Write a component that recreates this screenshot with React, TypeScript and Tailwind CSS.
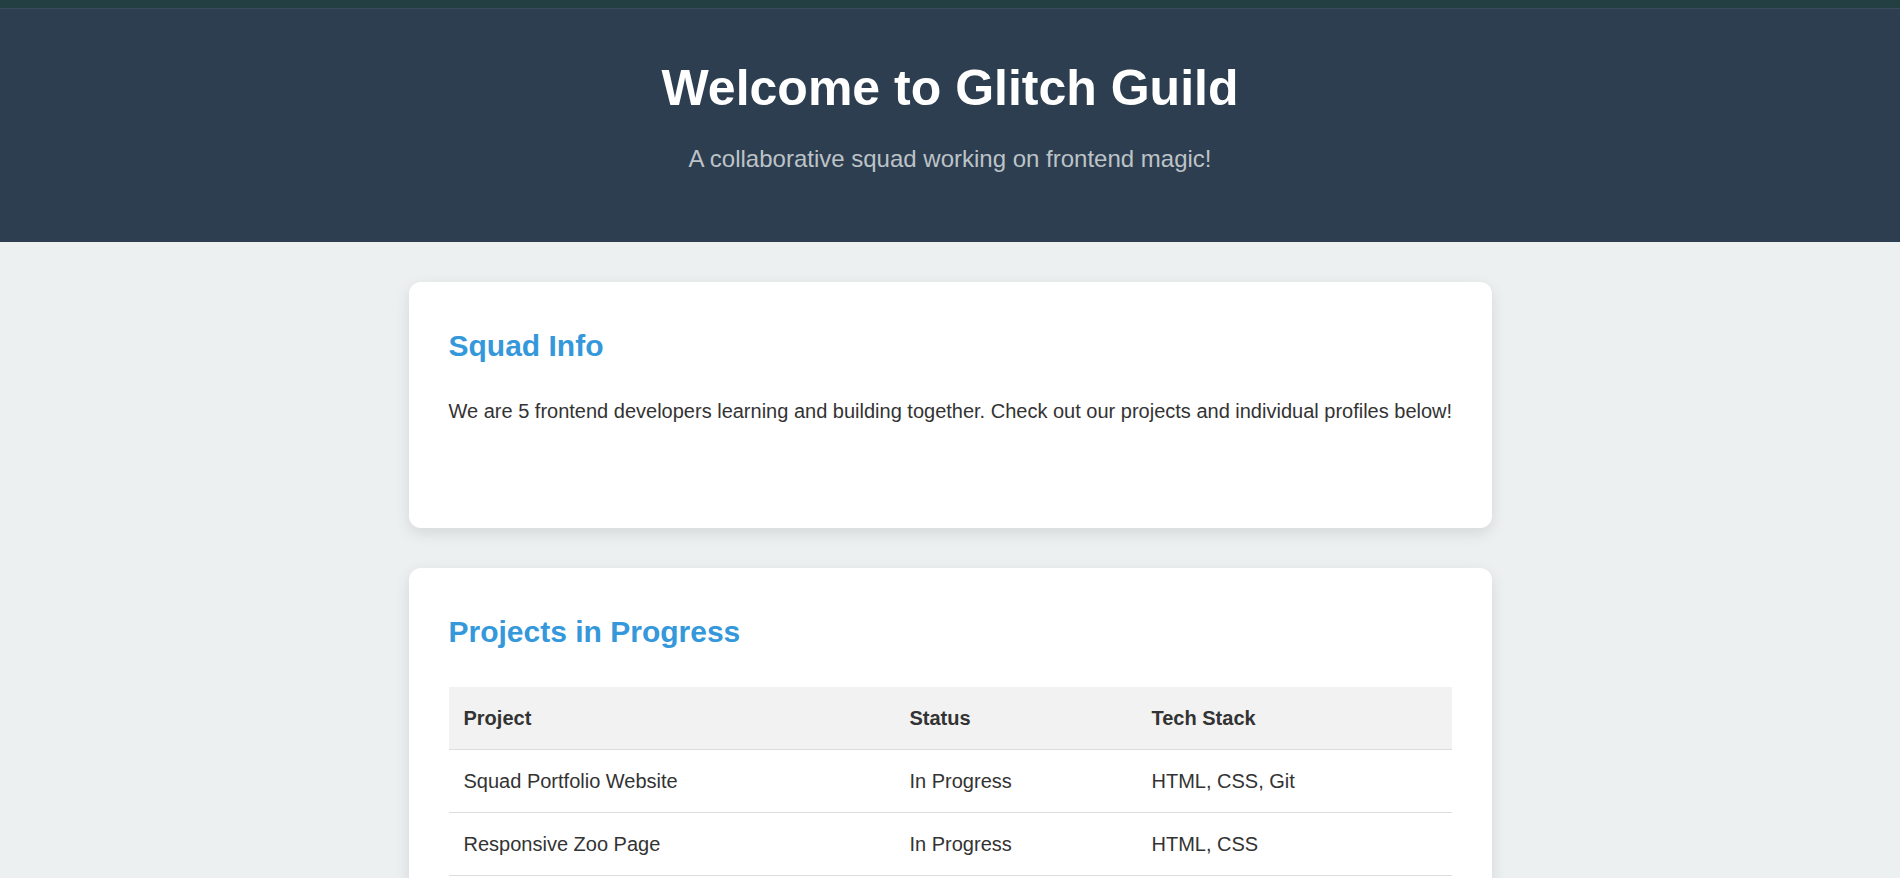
const projects = [
  { name: "Squad Portfolio Website", status: "In Progress", stack: "HTML, CSS, Git" },
  { name: "Responsive Zoo Page", status: "In Progress", stack: "HTML, CSS" },
  { name: "Team Landing Page", status: "Planned", stack: "HTML, CSS, JavaScript" },
];

const Card = ({ title, children }: { title: string; children: React.ReactNode }) => (
  <section className="bg-white rounded-[12px] shadow-[0_5px_15px_rgba(0,0,0,0.1)] p-[40px]">
    <h2 className="text-[30px] leading-[48px] font-bold text-[#3498db]">{title}</h2>
    {children}
  </section>
);

export default function App() {
  return (
    <div className="min-h-screen bg-[#ecf0f1] text-[#333] text-[20px] leading-[32px] font-['Liberation_Sans',Arial,sans-serif]">
      <div className="h-[9px] bg-[#243f41] border-b border-[#3b4b5c]" />
      <header className="bg-[#2c3e50] h-[233px] text-center pt-[39px]">
        <h1 className="text-[50px] leading-[80px] font-bold text-white">Welcome to Glitch Guild</h1>
        <p className="mt-[12px] text-[24px] leading-[38px] text-[#bdc3c7]">
          A collaborative squad working on frontend magic!
        </p>
      </header>

      <main className="w-[1083px] mx-auto pt-[40px] pb-[40px] flex flex-col gap-[40px]">
        <Card title="Squad Info">
          <p className="mt-[25px] mb-[61px] whitespace-nowrap">
            We are 5 frontend developers learning and building together. Check out our projects and individual profiles below!
          </p>
        </Card>

        <Card title="Projects in Progress">
          <table className="w-full mt-[31px] border-collapse text-left">
            <thead>
              <tr className="bg-[#f2f2f2] border-b border-[#ddd]">
                <th className="px-[15px] py-[15px] font-bold w-[446px]">Project</th>
                <th className="px-[15px] py-[15px] font-bold w-[242px]">Status</th>
                <th className="px-[15px] py-[15px] font-bold">Tech Stack</th>
              </tr>
            </thead>
            <tbody>
              {projects.map((p) => (
                <tr key={p.name} className="border-b border-[#ddd]">
                  <td className="px-[15px] py-[15px]">{p.name}</td>
                  <td className="px-[15px] py-[15px]">{p.status}</td>
                  <td className="px-[15px] py-[15px]">{p.stack}</td>
                </tr>
              ))}
            </tbody>
          </table>
        </Card>
      </main>
    </div>
  );
}
